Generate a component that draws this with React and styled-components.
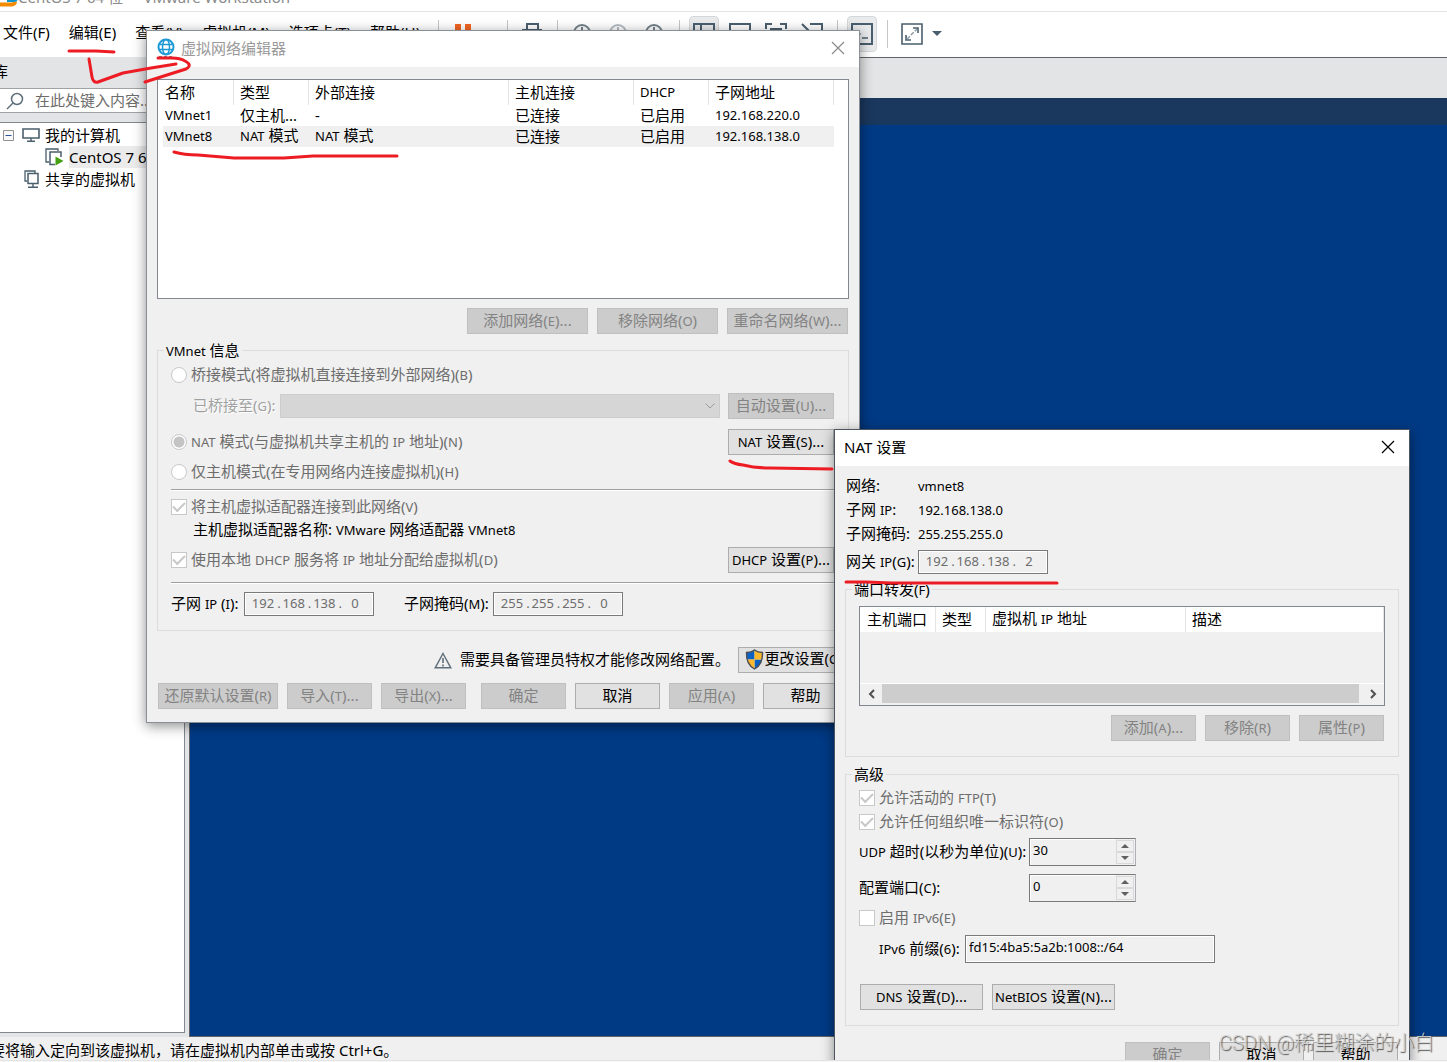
import styled, { createGlobalStyle, css } from 'styled-components';

const GlobalStyle = createGlobalStyle`
  * {
    box-sizing: border-box;
  }
  body {
    margin: 0;
    font-family: "Noto Sans", "Noto Sans CJK SC", sans-serif;
    font-size: 15px;
    line-height: 20px;
    color: #000;
    background: #f0f0f0;
  }
  button, input, select {
    margin: 0;
    font: inherit;
    color: inherit;
  }
`;

/* main window */

const Page = styled.div`
  position: relative;
  display: flex;
  flex-direction: column;
  height: 100vh;
  overflow: hidden;
`;

const Screen = styled.div`
  position: relative;
  flex: 1;
  min-height: 0;
  display: flex;
  flex-direction: column;
  overflow: hidden;
`;

const BottomStrip = styled.div`
  flex: none;
  height: 2px;
  background: #f6f6f6;
  border-top: 1px solid #e4e4e4;
`;

const AppTitle = styled.header`
  flex: none;
  display: flex;
  align-items: flex-end;
  height: 12px;
  padding-bottom: 4px;
  background: #fff;
  border-bottom: 1px solid #e3e4e6;
  color: #8a8a8a;
  white-space: pre;
  overflow: hidden;
`;

const MenuBar = styled.div`
  flex: none;
  display: flex;
  align-items: center;
  height: 45px;
  padding-bottom: 2px;
  background: #fff;
`;

const Menus = styled.nav`
  flex: 0 0 438px;
  display: flex;
  gap: 19px;
  padding: 0 0 4px 3px;
  white-space: nowrap;
`;

const MenuItem = styled.button`
  padding: 0;
  border: 0;
  background: none;
`;

const ToolGroup = styled.div`
  display: flex;
  align-items: center;
  gap: 6px;
  height: 28px;
  padding: 0 10px 0 9px;
  border-left: 1px solid #c4c6c8;
`;

const ToolButton = styled.button`
  display: flex;
  align-items: center;
  justify-content: center;
  width: 30px;
  height: 36px;
  padding: 0;
  border: 1px solid ${p => p.$on ? "#d5d8da" : "transparent"};
  border-radius: 4px;
  background: ${p => p.$on ? "#e8eaeb" : "none"};
`;

const Caret = styled.span`
  margin: 0 4px 0 -1px;
  border: 5px solid transparent;
  border-top-color: #4a5f6e;
  border-bottom: 0;
`;

const Body = styled.div`
  flex: 1;
  min-height: 0;
  display: flex;
`;

const Sidebar = styled.aside`
  flex: 0 0 189px;
  min-width: 0;
  display: flex;
  flex-direction: column;
  padding-bottom: 4px;
  background: #e3e4e6;
`;

const SidebarTitle = styled.div`
  height: 31px;
  line-height: 29px;
  margin-left: -7px;
`;

const SearchBox = styled.label`
  display: flex;
  align-items: center;
  gap: 11px;
  height: 25px;
  margin-right: 4px;
  padding-left: 6px;
  background: #fff;
  border: 1px solid #a0a3a6;
  border-left: 0;

  svg {
    flex: none;
  }
  input {
    flex: 1;
    min-width: 0;
    padding: 0 0 2px;
    border: 0;
    background: none;
  }
  input::placeholder {
    color: #6d6d6d;
  }
`;

const Tree = styled.ul`
  flex: 1;
  margin: 9px 4px 0 0;
  padding: 1px 0;
  list-style: none;
  background: #fff;
  border: 1px solid #828790;
  border-left: 0;
  white-space: nowrap;
  overflow: hidden;
`;

const TreeRow = styled.li`
  display: flex;
  align-items: center;
  height: 22px;
  padding-left: ${p => p.$indent}px;

  svg {
    flex: none;
    margin-right: 5px;
  }
  svg + svg {
    margin-left: 3px;
  }
  span {
    flex: 1;
    line-height: 22px;
    background: ${p => p.$selected ? "#ebebeb" : "none"};
  }
`;

const Guest = styled.main`
  flex: 1;
  display: flex;
  flex-direction: column;
  background: #003a85;
  border: 1px solid #5f6468;
  border-right: 0;
`;

const TabStrip = styled.div`
  height: 40px;
  background: #e3e4e6;
`;

const GuestHeader = styled.div`
  height: 27px;
  background: #1a375d;
`;

const StatusBar = styled.footer`
  flex: none;
  height: 23px;
  line-height: 26px;
  margin-left: -10px;
  background: #f0f0f0;
  white-space: nowrap;
`;

/* dialogs */

const Dialog = styled.section`
  position: absolute;
  left: ${p => p.$x}px;
  top: ${p => p.$y}px;
  width: ${p => p.$w}px;
  background: #f0f0f0;
  border: 1px solid ${p => p.$active ? "#4d5560" : "#8b9096"};
  box-shadow: 0 3px 12px rgba(0, 0, 0, 0.45);
`;

const DialogTitle = styled.header`
  display: flex;
  align-items: center;
  gap: 6px;
  height: 36px;
  padding: 0 14px 2px ${p => p.$inset}px;
  background: #fff;
  color: ${p => p.$inactive ? "#999" : "#000"};
`;

const CloseButton = styled.button`
  display: flex;
  margin-left: auto;
  padding: 0;
  border: 0;
  background: none;
`;

const DialogBody = styled.div`
  padding: ${p => p.$pad};
`;

const Latin = styled.span`
  font-size: 13px;
`;

const Button = styled.button`
  display: flex;
  flex: none;
  align-items: center;
  justify-content: center;
  width: ${p => p.$w}px;
  height: 26px;
  margin-left: ${p => p.$apart ? 6 : 0}px;
  padding: 0 0 2px;
  border: 1px solid #adadad;
  background: #e1e1e1;
  white-space: nowrap;
  overflow: hidden;

  &:disabled {
    border-color: #bfbfbf;
    background: #ccc;
    color: #838383;
  }
`;

const Buttons = styled.div`
  display: flex;
  justify-content: ${p => p.$start ? "flex-start" : "flex-end"};
  gap: 9px;
  margin-top: ${p => p.$top}px;
  padding: 0 1px;
`;

const Group = styled.fieldset`
  min-width: 0;
  margin: ${p => p.$top}px 0 0;
  padding: 0 13px ${p => p.$bottom}px;
  border: 1px solid #dcdcdc;
`;

const Legend = styled.legend`
  margin-left: -7px;
  padding: 0 2px;
  line-height: 20px;
`;

const Row = styled.div`
  display: flex;
  align-items: center;
  height: ${p => p.$h}px;
  padding-left: ${p => p.$indent || 0}px;
  white-space: nowrap;

  > button {
    margin: 0 1px 0 auto;
  }
`;

const Caption = styled.label`
  flex: none;
  width: ${p => p.$w}px;
  padding-bottom: 2px;
  ${p => p.$disabled && css`
    color: #a0a0a0;
    text-shadow: 1px 1px 0 #fff;
  `}
`;

const Rule = styled.hr`
  height: 2px;
  margin: ${p => p.$top}px 0 ${p => p.$bottom}px;
  border: 0;
  border-top: 1px solid #a0a0a0;
  background: #fff;
`;

const CheckLabel = styled.label`
  display: flex;
  align-items: center;
  gap: 4px;
  color: #6d6d6d;

  span {
    padding-bottom: 1px;
  }
`;

const Tick = styled.input`
  appearance: none;
  flex: none;
  width: 16px;
  height: 16px;
  background: #fff;
  border: 1px solid #c8c8c8;
  border-radius: ${p => p.type === "radio" ? "50%" : "0"};

  &[type="radio"]:checked {
    background: radial-gradient(circle, #c4c4c4 0 5px, #fff 6px);
  }
  &[type="checkbox"]:checked {
    display: grid;
    place-items: center;
  }
  &[type="checkbox"]:checked::before {
    content: "";
    width: 10px;
    height: 5px;
    margin-bottom: 3px;
    border: solid #c8c8c8;
    border-width: 0 0 2px 2px;
    rotate: -45deg;
  }
`;

const SelectBox = styled.div`
  flex: 1;
  position: relative;
  margin-right: 8px;

  select {
    display: block;
    appearance: none;
    width: 100%;
    height: 24px;
    border: 1px solid #bfbfbf;
    border-radius: 0;
    background: #ccc;
  }
  svg {
    position: absolute;
    right: 5px;
    top: 9px;
  }
`;

const IpBox = styled.div`
  display: flex;
  width: 130px;
  height: 24px;
  padding: 0 5px;
  border: 1px solid #7a7a7a;
  background: #f0f0f0;
  box-shadow: inset 0 0 0 1px #fff;
  color: #6d6d6d;
  font-size: 13px;
  line-height: 21px;

  input {
    width: 26px;
    padding: 0 0 1px;
    border: 0;
    background: none;
    text-align: center;
  }
  span {
    width: 5px;
    text-align: right;
  }
`;

const TextBox = styled.input`
  width: ${p => p.$w}px;
  height: 28px;
  padding: 0 3px 5px;
  border: 1px solid #7a7a7a;
  background: #f0f0f0;
  box-shadow: inset 0 0 0 1px #fff;
  font-size: 13px;
`;

const SpinBox = styled.div`
  display: flex;
  width: 107px;
  height: 28px;
  border: 1px solid #7a7a7a;
  border-right-color: #adb0b5;
  font-size: 13px;

  input {
    flex: 1;
    min-width: 0;
    padding: 0 3px 5px;
    border: 0;
    background: #f0f0f0;
    box-shadow: inset 1px 1px 0 #fff;
    appearance: textfield;
  }
  input::-webkit-inner-spin-button {
    appearance: none;
  }
`;

const SpinArrows = styled.div`
  display: grid;
  grid-template-rows: 1fr 1fr;
  width: 20px;
  padding: 1px;

  button {
    display: grid;
    place-items: center;
    padding: 0;
    border: 1px solid #d9d9d9;
    background: #f0f0f0;
  }
`;

const ListBox = styled.div`
  height: ${p => p.$h}px;
  margin-top: ${p => p.$top || 0}px;
  display: flex;
  flex-direction: column;
  border: 1px solid #828790;
  background: ${p => p.$disabled ? "#f0f0f0" : "#fff"};
  overflow: hidden;
`;

const Table = styled.table`
  width: ${p => p.$w};
  table-layout: fixed;
  border-collapse: separate;
  border-spacing: 0;
  text-align: left;
  white-space: nowrap;

  th {
    height: 25px;
    padding: 0 0 2px 6px;
    font-weight: 400;
    background: #fff;
    border-right: 1px solid #e5e5e5;
  }
  td {
    height: 20px;
    padding: 0 0 1px 6px;
    line-height: 19px;
  }
  th:first-child, td:first-child {
    padding-left: 7px;
  }
`;

const NetRow = styled.tr`
  background: ${p => p.$selected ? "linear-gradient(#f0f0f0, #f0f0f0) 5px 0 no-repeat" : "none"};
`;

const ScrollBar = styled.div`
  display: flex;
  align-items: center;
  height: 22px;
  margin-top: auto;
  padding: 0 1px 2px;
  border-top: 1px solid #fff;

  button {
    display: grid;
    place-items: center;
    width: 21px;
    height: 19px;
    padding: 0;
    border: 0;
    background: #f0f0f0;
  }
  div {
    flex: 1;
    height: 19px;
    margin-right: 3px;
    background: #cdcdcd;
  }
`;

const Notice = styled.div`
  display: flex;
  align-items: center;
  justify-content: flex-end;
  gap: 8px;
  margin-top: 16px;

  span {
    padding-bottom: 2px;
  }
`;

const Markup = styled.svg`
  position: absolute;
  left: 0;
  top: 0;
  pointer-events: none;
`;

const Watermark = styled.div`
  position: absolute;
  right: 13px;
  bottom: 6px;
  font-family: Roboto, "Noto Sans CJK SC", sans-serif;
  font-size: 20px;
  font-weight: 300;
  line-height: 26px;
  color: rgba(215, 215, 215, 0.9);
  text-shadow: 1px 1px 1px rgba(0, 0, 0, 0.65);
`;

/* icons */

const Icon = ({ w = 22, h = 22, color = "#4a5f6e", children }) => (
  <svg width={w} height={h} viewBox={`0 0 ${w} ${h}`} fill="none" stroke={color} strokeWidth="2" aria-hidden="true">
    {children}
  </svg>
);

const PauseIcon = () => (
  <Icon color="#f26522">
    <path d="M6 1v20M16 1v20" strokeWidth="6" />
  </Icon>
);

const SendKeysIcon = () => (
  <Icon>
    <path d="M6 7V1h11v6M2 7h18v9H2z" />
  </Icon>
);

const ClockIcon = ({ color = "#71808b" }) => (
  <Icon color={color}>
    <circle cx="11" cy="10" r="8" />
    <path d="M11 4v7h4" />
  </Icon>
);

const LibraryIcon = () => (
  <Icon>
    <path d="M1 1h20v20H1zM8 1v20M8 11h13" />
  </Icon>
);

const ThumbnailIcon = () => (
  <Icon>
    <path d="M1 1h20v20H1zM1 15h20" />
  </Icon>
);

const FullIcon = () => (
  <Icon>
    <path d="M1 6V1h6M15 1h6v5M1 16v5h6M15 21h6v-5M6 6h10v10H6z" />
  </Icon>
);

const UnityIcon = () => (
  <Icon>
    <path d="M1 1l8 8M9 1h12v10H13M3 10v11h12" />
  </Icon>
);

const ConsoleIcon = () => (
  <Icon>
    <path d="M1 1h20v20H1z" />
    <path d="M5 8l4 3-4 3M11 15h6" strokeWidth="1.5" />
  </Icon>
);

const StretchIcon = () => (
  <Icon>
    <path d="M1 1h20v20H1z" strokeWidth="1.6" />
    <path d="M12 5h5v5M5 12v5h5" strokeWidth="1.6" />
    <path d="M6 16L16 6" strokeWidth="1.4" strokeDasharray="4 1.5" stroke="#8a98a3" />
  </Icon>
);

const SearchIcon = () => (
  <Icon w={18} h={18} color="#5f6e79">
    <circle cx="11" cy="7" r="5.5" strokeWidth="1.5" />
    <path d="M7 11l-6 6" strokeWidth="1.5" />
  </Icon>
);

const MinusIcon = () => (
  <Icon w={11} h={11} color="#919191">
    <path d="M.5.5h10v10H.5z" strokeWidth="1" fill="#f8f8f8" />
    <path d="M2.5 5.5h6" strokeWidth="1" stroke="#2c4f9e" />
  </Icon>
);

const MonitorIcon = () => (
  <Icon w={18} h={14}>
    <path d="M1 1h16v9H1z" strokeWidth="1.6" />
    <path d="M9 10v3M5 13.2h8" strokeWidth="1.4" />
  </Icon>
);

const RunningVmIcon = () => (
  <Icon w={19} h={18}>
    <path d="M4 14H1V1h12v2" strokeWidth="1.3" />
    <path d="M10 16.5H5V4h11v5" strokeWidth="1.5" />
    <path d="M10.5 8.5v9l8-4.5z" fill="#44a012" stroke="none" />
  </Icon>
);

const SharedVmIcon = () => (
  <Icon w={16} h={18}>
    <path d="M3 11H1V1h10v2" strokeWidth="1.3" />
    <path d="M4 3.5h10v10H4z" strokeWidth="1.5" />
    <path d="M9 14v3M4 17.2h10" strokeWidth="1.4" />
  </Icon>
);

const GlobeIcon = () => (
  <Icon w={18} h={20} color="#1d9ad6">
    <circle cx="9" cy="9" r="7.5" />
    <ellipse cx="9" cy="9" rx="3.5" ry="7.5" strokeWidth="1.5" />
    <path d="M2 6.5h14M2 11.5h14" strokeWidth="1.5" />
    <path d="M2 19h14" strokeDasharray="3 2" stroke="#4a5f6e" strokeWidth="1.5" />
  </Icon>
);

const AppIcon = () => (
  <Icon w={18} h={18} color="#f38b00">
    <path d="M0 15.500h12a3 3 0 0 0 3-3" strokeWidth="4" />
    <path d="M7 11h7a2 2 0 0 0 2-2V3" strokeWidth="4" stroke="#0b95d0" />
  </Icon>
);

const CloseIcon = ({ color }) => (
  <Icon w={14} h={14} color={color}>
    <path d="M1 1l12 12M13 1L1 13" strokeWidth="1.2" />
  </Icon>
);

const WarningIcon = () => (
  <Icon w={18} h={17} color="#5f6e79">
    <path d="M9 1.5L16.8 15.8H1.2z" strokeWidth="1.4" />
    <path d="M9 6v5M9 12.5v2" strokeWidth="1.6" />
  </Icon>
);

const shieldPath = "M9.5 1C7 3 4 3.5 1.5 3.5c-.3 8 1.5 13 8 16.5 6.5-3.5 8.3-8.5 8-16.5C15 3.5 12 3 9.5 1z";

const ShieldIcon = () => (
  <svg width="19" height="21" viewBox="0 0 19 21" aria-hidden="true">
    <clipPath id="shield">
      <path d={shieldPath} />
    </clipPath>
    <g clipPath="url(#shield)">
      <path d="M0 0h9.5v10.5H0zM9.5 10.5H19V21H9.5z" fill="#0b62c4" />
      <path d="M9.5 0H19v10.5H9.5zM0 10.5h9.5V21H0z" fill="#fdb82c" />
    </g>
    <path d={shieldPath} fill="none" stroke="#4b4f54" strokeWidth="1.4" />
  </svg>
);

const Chevron = ({ d, w, h, color, thick }) => (
  <Icon w={w} h={h} color={color}>
    <path d={d} strokeWidth={thick} />
  </Icon>
);

const Triangle = ({ d }) => (
  <svg width="8" height="4" viewBox="0 0 8 4" aria-hidden="true"><path d={d} fill="#606060" /></svg>
);

/* shared pieces */

// latin words and numbers are set smaller than the chinese text around them
const Text = ({ children }) => children.split(/([A-Za-z0-9][A-Za-z0-9.]*)/).map((part, i) => (
  i % 2 ? <Latin key={i}>{part}</Latin> : part
));

const Option = ({ type = "checkbox", text, checked }) => (
  <CheckLabel>
    <Tick type={type} disabled name={type === "radio" ? "mode" : undefined} defaultChecked={checked} />
    <span><Text>{text}</Text></span>
  </CheckLabel>
);

const IpField = ({ id, value }) => (
  <IpBox>
    {value.split(".").flatMap((part, i) => [
      i > 0 && <span key={`dot${i}`}>.</span>,
      <input key={i} id={i === 0 ? id : undefined} aria-label={i ? `${id} ${i + 1}` : undefined} defaultValue={part} disabled />,
    ])}
  </IpBox>
);

const Spinner = ({ id, value }) => (
  <SpinBox>
    <input id={id} type="number" defaultValue={value} />
    <SpinArrows>
      <button aria-label="+"><Triangle d="M4 0l4 4H0z" /></button>
      <button aria-label="-"><Triangle d="M0 0h8L4 4z" /></button>
    </SpinArrows>
  </SpinBox>
);

const menus = ["文件(F)", "编辑(E)", "查看(V)", "虚拟机(M)", "选项卡(T)", "帮助(H)"];

const netColumns = [
  { label: "名称", width: 76 },
  { label: "类型", width: 75 },
  { label: "外部连接", width: 200 },
  { label: "主机连接", width: 125 },
  { label: "DHCP", width: 75 },
  { label: "子网地址", width: 125 },
];

const networks = [
  ["VMnet1", "仅主机...", "-", "已连接", "已启用", "192.168.220.0"],
  ["VMnet8", "NAT 模式", "NAT 模式", "已连接", "已启用", "192.168.138.0"],
];

const portColumns = [
  { label: "主机端口", width: 76 },
  { label: "类型", width: 50 },
  { label: "虚拟机 IP 地址", width: 200 },
  { label: "描述" },
];

const strokes = [
  "M69 51h27l18 1",
  "M89 59l3 18q1 6 6 5l25-9 28-5 25-4",
  "M158 58h14q8 0 13 3 8 4 1 8l-19 6-22 7",
  "M174 152q10 3 24 3l36 3h50l29-2h84",
  "M730 461q4 3 13 4 12 3 27 3l62 1",
  "M846 582h20l26 1h165",
];

const Columns = ({ items }) => (
  <>
    <colgroup>{items.map(c => <col key={c.label} style={{ width: c.width }} />)}</colgroup>
    <thead>
      <tr>{items.map(c => <th key={c.label}><Text>{c.label}</Text></th>)}</tr>
    </thead>
  </>
);

const NetworkEditor = () => (
  <Dialog $x={146} $y={30} $w={714}>
    <DialogTitle $inset={10} $inactive>
      <GlobeIcon />
      虚拟网络编辑器
      <CloseButton aria-label="关闭"><CloseIcon color="#8a8a8a" /></CloseButton>
    </DialogTitle>
    <DialogBody $pad="12px 10px 13px">
      <ListBox $h={220}>
        <Table $w="676px">
          <Columns items={netColumns} />
          <tbody>
            {networks.map((net, i) => (
              <NetRow key={net[0]} $selected={i === 1}>
                {net.map((cell, j) => <td key={j}><Text>{cell}</Text></td>)}
              </NetRow>
            ))}
          </tbody>
        </Table>
      </ListBox>
      <Buttons $top={9}>
        <Button $w={121} disabled><span><Text>添加网络(E)...</Text></span></Button>
        <Button $w={121} disabled><span><Text>移除网络(O)</Text></span></Button>
        <Button $w={121} disabled><span><Text>重命名网络(W)...</Text></span></Button>
      </Buttons>
      <Group $top={6} $bottom={6}>
        <Legend><Text>VMnet 信息</Text></Legend>
        <Row $h={28}><Option type="radio" text="桥接模式(将虚拟机直接连接到外部网络)(B)" /></Row>
        <Row $h={34} $indent={22}>
          <Caption $w={87} $disabled htmlFor="bridge"><Text>已桥接至(G):</Text></Caption>
          <SelectBox>
            <select id="bridge" disabled />
            <Chevron w={10} h={6} d="M.5.5L5 5 9.5.5" color="#9a9a9a" thick={1} />
          </SelectBox>
          <Button $w={106} disabled><span><Text>自动设置(U)...</Text></span></Button>
        </Row>
        <Row $h={38}>
          <Option type="radio" text="NAT 模式(与虚拟机共享主机的 IP 地址)(N)" checked />
          <Button $w={106}><span><Text>NAT 设置(S)...</Text></span></Button>
        </Row>
        <Row $h={22}><Option type="radio" text="仅主机模式(在专用网络内连接虚拟机)(H)" /></Row>
        <Rule $top={6} $bottom={5} />
        <Row $h={22}><Option text="将主机虚拟适配器连接到此网络(V)" checked /></Row>
        <Row $h={24} $indent={22}><Caption as="span"><Text>主机虚拟适配器名称: VMware 网络适配器 VMnet8</Text></Caption></Row>
        <Row $h={36}>
          <Option text="使用本地 DHCP 服务将 IP 地址分配给虚拟机(D)" checked />
          <Button $w={106}><span><Text>DHCP 设置(P)...</Text></span></Button>
        </Row>
        <Rule $top={4} $bottom={0} />
        <Row $h={40}>
          <Caption $w={73} htmlFor="subnet"><Text>子网 IP (I):</Text></Caption>
          <IpField id="subnet" value="192.168.138.0" />
          <Row $indent={30}>
            <Caption $w={89} htmlFor="mask"><Text>子网掩码(M):</Text></Caption>
            <IpField id="mask" value="255.255.255.0" />
          </Row>
        </Row>
      </Group>
      <Notice>
        <WarningIcon />
        <span>需要具备管理员特权才能修改网络配置。</span>
        <Button $w={111}><ShieldIcon /><span><Text>更改设置(C)</Text></span></Button>
      </Notice>
      <Buttons $top={10}>
        <Button $w={120} disabled><span><Text>还原默认设置(R)</Text></span></Button>
        <Button $w={85} disabled><span><Text>导入(T)...</Text></span></Button>
        <Button $w={85} disabled><span><Text>导出(X)...</Text></span></Button>
        <Button $w={85} $apart disabled>确定</Button>
        <Button $w={85}>取消</Button>
        <Button $w={85} disabled><span><Text>应用(A)</Text></span></Button>
        <Button $w={85}>帮助</Button>
      </Buttons>
    </DialogBody>
  </Dialog>
);

const NatSettings = () => (
  <Dialog $x={834} $y={429} $w={576} $active>
    <DialogTitle $inset={9}>
      NAT 设置
      <CloseButton aria-label="关闭"><CloseIcon color="#000" /></CloseButton>
    </DialogTitle>
    <DialogBody $pad="8px 10px 0">
      <Row $h={24} $indent={1}><Caption as="span" $w={72}><Text>网络:</Text></Caption><Latin>vmnet8</Latin></Row>
      <Row $h={24} $indent={1}><Caption as="span" $w={72}><Text>子网 IP:</Text></Caption><Latin>192.168.138.0</Latin></Row>
      <Row $h={24} $indent={1}><Caption as="span" $w={72}><Text>子网掩码:</Text></Caption><Latin>255.255.255.0</Latin></Row>
      <Row $h={32} $indent={1}>
        <Caption $w={72} htmlFor="gateway"><Text>网关 IP(G):</Text></Caption>
        <IpField id="gateway" value="192.168.138.2" />
      </Row>
      <Group $top={1} $bottom={15}>
        <Legend><Text>端口转发(F)</Text></Legend>
        <ListBox $h={100} $top={6} $disabled>
          <Table $w="100%"><Columns items={portColumns} /></Table>
          <ScrollBar>
            <button aria-label="向左"><Chevron w={8} h={12} d="M6 2L2 6l4 4" color="#505050" thick={2} /></button>
            <div />
            <button aria-label="向右"><Chevron w={8} h={12} d="M2 2l4 4-4 4" color="#505050" thick={2} /></button>
          </ScrollBar>
        </ListBox>
        <Buttons $top={9}>
          <Button $w={85} disabled><span><Text>添加(A)...</Text></span></Button>
          <Button $w={85} disabled><span><Text>移除(R)</Text></span></Button>
          <Button $w={85} disabled><span><Text>属性(P)</Text></span></Button>
        </Buttons>
      </Group>
      <Group $top={7} $bottom={15}>
        <Legend>高级</Legend>
        <Row $h={28}><Option text="允许活动的 FTP(T)" checked /></Row>
        <Row $h={20}><Option text="允许任何组织唯一标识符(O)" checked /></Row>
        <Row $h={40}>
          <Caption $w={170} htmlFor="udp"><Text>UDP 超时(以秒为单位)(U):</Text></Caption>
          <Spinner id="udp" value={30} />
        </Row>
        <Row $h={32}>
          <Caption $w={170} htmlFor="port"><Text>配置端口(C):</Text></Caption>
          <Spinner id="port" value={0} />
        </Row>
        <Row $h={28}><Option text="启用 IPv6(E)" /></Row>
        <Row $h={34} $indent={20}>
          <Caption $w={86} htmlFor="prefix"><Text>IPv6 前缀(6):</Text></Caption>
          <TextBox id="prefix" $w={250} defaultValue="fd15:4ba5:5a2b:1008::/64" />
        </Row>
        <Buttons $top={18} $start>
          <Button $w={123}><span><Text>DNS 设置(D)...</Text></span></Button>
          <Button $w={123}><span><Text>NetBIOS 设置(N)...</Text></span></Button>
        </Buttons>
      </Group>
      <Buttons $top={16}>
        <Button $w={85} disabled>确定</Button>
        <Button $w={85}>取消</Button>
        <Button $w={85}>帮助</Button>
      </Buttons>
    </DialogBody>
  </Dialog>
);

function App() {
  return (
    <Page>
      <GlobalStyle />
      <Screen>
        <AppTitle><AppIcon />CentOS 7 64 位  -  VMware Workstation</AppTitle>
        <MenuBar>
          <Menus>{menus.map(m => <MenuItem key={m}>{m}</MenuItem>)}</Menus>
          <ToolGroup><ToolButton><PauseIcon /></ToolButton><Caret /></ToolGroup>
          <ToolGroup><ToolButton><SendKeysIcon /></ToolButton></ToolGroup>
          <ToolGroup>
            <ToolButton><ClockIcon /></ToolButton>
            <ToolButton><ClockIcon color="#b4bcc2" /></ToolButton>
            <ToolButton><ClockIcon /></ToolButton>
          </ToolGroup>
          <ToolGroup>
            <ToolButton $on><LibraryIcon /></ToolButton>
            <ToolButton><ThumbnailIcon /></ToolButton>
            <ToolButton><FullIcon /></ToolButton>
            <ToolButton><UnityIcon /></ToolButton>
          </ToolGroup>
          <ToolGroup><ToolButton $on><ConsoleIcon /></ToolButton></ToolGroup>
          <ToolGroup><ToolButton><StretchIcon /></ToolButton><Caret /></ToolGroup>
        </MenuBar>
        <Body>
          <Sidebar>
            <SidebarTitle>库</SidebarTitle>
            <SearchBox>
              <SearchIcon />
              <input placeholder="在此处键入内容..." />
            </SearchBox>
            <Tree>
              <TreeRow $indent={3}><MinusIcon /><MonitorIcon /><span>我的计算机</span></TreeRow>
              <TreeRow $indent={45} $selected><RunningVmIcon /><span>CentOS 7 64 位</span></TreeRow>
              <TreeRow $indent={24}><SharedVmIcon /><span>共享的虚拟机</span></TreeRow>
            </Tree>
          </Sidebar>
          <Guest>
            <TabStrip />
            <GuestHeader />
          </Guest>
        </Body>
        <StatusBar>要将输入定向到该虚拟机，请在虚拟机内部单击或按 Ctrl+G。</StatusBar>
        <NetworkEditor />
        <NatSettings />
      </Screen>
      <BottomStrip />
      <Markup width="1447" height="1062" fill="none" stroke="#ed1c24" strokeWidth="3" strokeLinecap="round" strokeLinejoin="round">
        {strokes.map(d => <path key={d} d={d} />)}
      </Markup>
      <Watermark>CSDN @稀里糊涂的小白</Watermark>
    </Page>
  );
}

export default App;
